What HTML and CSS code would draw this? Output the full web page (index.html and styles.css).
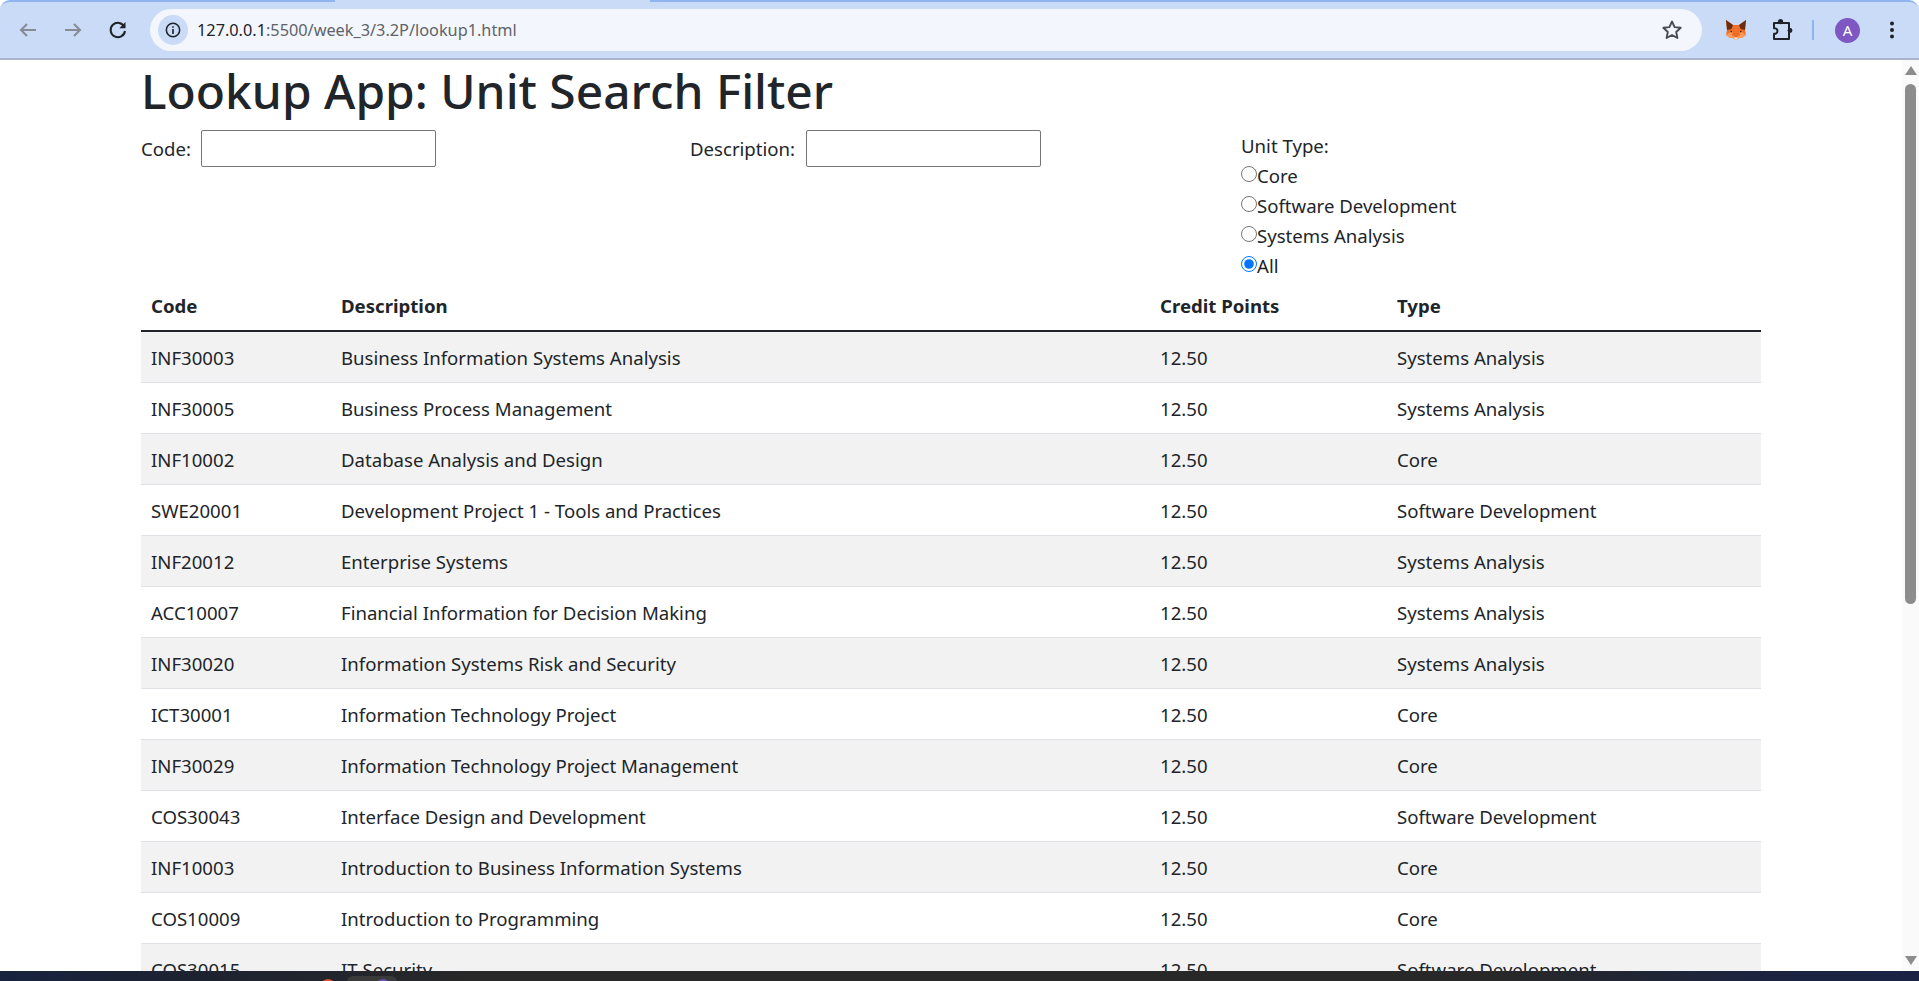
FILE: index.html
```html
<!DOCTYPE html>
<html lang="en">
<head>
<meta charset="utf-8">
<title>Lookup App</title>
<link rel="stylesheet" href="styles.css">
</head>
<body>
<div class="window">
  <header class="toolbar">
    <svg class="tb-icon" viewBox="0 0 24 24"><path d="M20 12H5M11 6l-6 6 6 6" fill="none" stroke="#868b94" stroke-width="2"/></svg>
    <svg class="tb-icon" viewBox="0 0 24 24"><path d="M4 12h15M13 6l6 6-6 6" fill="none" stroke="#868b94" stroke-width="2"/></svg>
    <svg class="tb-icon" viewBox="0 0 24 24"><path d="M18.400 9A7.200 7.200 0 1 0 19 13" fill="none" stroke="#1f2329" stroke-width="2"/><path d="M19.500 4v6.200h-6.200z" fill="#1f2329"/></svg>
    <div class="omnibox">
      <span class="site-info"><svg viewBox="0 0 20 20" width="18" height="18"><circle cx="10" cy="10" r="7.400" fill="none" stroke="#1f2329" stroke-width="1.700"/><path d="M9.100 9h1.800v5.400H9.100zM9.100 5.700h1.800v1.800H9.100z" fill="#1f2329"/></svg></span>
      <span class="url"><span class="host">127.0.0.1</span>:5500/week_3/3.2P/lookup1.html</span>
      <svg class="star" viewBox="0 0 24 24"><path d="M12 3.500l2.600 5.600 6.100.7-4.500 4.200 1.200 6-5.400-3-5.400 3 1.200-6-4.500-4.200 6.100-.7z" fill="none" stroke="#4a4d52" stroke-width="1.900" stroke-linejoin="round"/></svg>
    </div>
    <svg class="fox" viewBox="0 0 22 22"><path d="M1 1l7 5h6l7-5-1 10 1 5-4 3-3 0-3 2-3-2-3 0-4-3 1-5z" fill="#f0702a"/><path d="M1 1l7 5-1.500 4L2 11zM21 1l-7 5 1.500 4 4.500 1z" fill="#6b2e10"/><path d="M1 16l6-4 4 2 4-2 6 4-4 3-3 0-3 2-3-2-3 0z" fill="#fb9a5c"/><path d="M8 12l3 2 3-2 1 4-4 3-4-3z" fill="#f06a22"/><path d="M9 18.500h4L12 20.500h-2z" fill="#f3e6da"/><path d="M5 11.500l2.500.8-1.300 1.400zM17 11.500l-2.500.8 1.300 1.400z" fill="#3b2410"/></svg>
    <svg class="puzzle" viewBox="0 0 24 24"><path d="M4 5h15v16H4v-5.200a3 3 0 0 0 3.500-2.800A3 3 0 0 0 4 10.200z" fill="none" stroke="#1f2329" stroke-width="2" stroke-linejoin="round"/><circle cx="10.500" cy="3.600" r="2.600" fill="#1f2329"/><circle cx="20" cy="12.500" r="2.400" fill="#1f2329"/></svg>
    <span class="divider"></span>
    <span class="avatar">A</span>
    <svg class="menu" viewBox="0 0 24 24"><circle cx="12" cy="5.500" r="2"/><circle cx="12" cy="12" r="2"/><circle cx="12" cy="18.500" r="2"/></svg>
  </header>
  <div class="viewport">
    <main class="page">
      <div class="container">
        <h1 class="title">Lookup App: Unit Search Filter</h1>
        <form class="filters">
          <div class="field"><label for="code">Code:</label><input id="code" class="text-input" type="text"></div>
          <div class="field field-desc"><label for="desc">Description:</label><input id="desc" class="text-input" type="text"></div>
          <div class="types">
            <div>Unit Type:</div>
            <label class="radio-row"><input type="radio" name="t">Core</label>
            <label class="radio-row"><input type="radio" name="t">Software Development</label>
            <label class="radio-row"><input type="radio" name="t">Systems Analysis</label>
            <label class="radio-row"><input type="radio" name="t" checked>All</label>
          </div>
        </form>
        <table class="units">
          <thead><tr><th>Code</th><th>Description</th><th>Credit Points</th><th>Type</th></tr></thead>
          <tbody>
            <tr><td>INF30003</td><td>Business Information Systems Analysis</td><td>12.50</td><td>Systems Analysis</td></tr>
            <tr><td>INF30005</td><td>Business Process Management</td><td>12.50</td><td>Systems Analysis</td></tr>
            <tr><td>INF10002</td><td>Database Analysis and Design</td><td>12.50</td><td>Core</td></tr>
            <tr><td>SWE20001</td><td>Development Project 1 - Tools and Practices</td><td>12.50</td><td>Software Development</td></tr>
            <tr><td>INF20012</td><td>Enterprise Systems</td><td>12.50</td><td>Systems Analysis</td></tr>
            <tr><td>ACC10007</td><td>Financial Information for Decision Making</td><td>12.50</td><td>Systems Analysis</td></tr>
            <tr><td>INF30020</td><td>Information Systems Risk and Security</td><td>12.50</td><td>Systems Analysis</td></tr>
            <tr><td>ICT30001</td><td>Information Technology Project</td><td>12.50</td><td>Core</td></tr>
            <tr><td>INF30029</td><td>Information Technology Project Management</td><td>12.50</td><td>Core</td></tr>
            <tr><td>COS30043</td><td>Interface Design and Development</td><td>12.50</td><td>Software Development</td></tr>
            <tr><td>INF10003</td><td>Introduction to Business Information Systems</td><td>12.50</td><td>Core</td></tr>
            <tr><td>COS10009</td><td>Introduction to Programming</td><td>12.50</td><td>Core</td></tr>
            <tr><td>COS30015</td><td>IT Security</td><td>12.50</td><td>Software Development</td></tr>
          </tbody>
        </table>
      </div>
    </main>
    <div class="scrollbar">
      <span class="arrow-up"></span>
      <div class="track"><span class="thumb"></span></div>
      <span class="arrow-down"></span>
    </div>
  </div>
  <footer class="taskbar">
    <span class="task-dot task-orange"></span>
    <span class="task-tab"><span class="task-dot task-purple"></span></span>
  </footer>
</div>
</body>
</html>
```
FILE: styles.css
```css
* { box-sizing: border-box; }
html, body { margin: 0; height: 100%; overflow: hidden; }
body { font-family: "Noto Sans", "Open Sans", sans-serif; font-size: 18.6px; color: #212529; background: #fff; }
.window { height: 981px; display: flex; flex-direction: column; }
.toolbar { position: relative; height: 60px; flex: none; display: flex; align-items: center; background: #c9dbf6; border-top: 2px solid #8fb4f0; border-bottom: 2px solid #a8b5cb; padding-left: 16px; border-top-left-radius: 10px; border-top-right-radius: 10px; }
.toolbar::before { content: ""; position: absolute; left: 335px; top: -2px; width: 315px; height: 2px; background: #c9dbf6; }
.tb-icon { width: 24px; height: 24px; margin-right: 21px; flex: none; }
.omnibox { margin-left: -1px; width: 1552px; height: 42px; border-radius: 21px; background: #f3f7fd; display: flex; align-items: center; padding: 0 18px 0 8px; flex: none; }
.site-info { width: 30px; height: 30px; border-radius: 50%; background: #c9dbf6; display: flex; align-items: center; justify-content: center; flex: none; }
.url { margin-left: 9px; font-size: 16.300px; color: #5f6368; flex: 1; }
.host { color: #1f2329; }
.star { width: 24px; height: 24px; flex: none; }
.fox { width: 22px; height: 22px; margin-left: 23px; flex: none; }
.puzzle { width: 24px; height: 24px; margin-left: 23px; flex: none; }
.divider { width: 2px; height: 20px; margin-left: 18px; background: #8fb4f0; flex: none; }
.avatar { width: 25px; height: 25px; margin-left: 21px; border-radius: 50%; background: #7e57c2; color: #fff; font-size: 15px; display: flex; align-items: center; justify-content: center; flex: none; }
.menu { width: 24px; height: 24px; margin-left: 20px; fill: #1f2329; flex: none; }
.viewport { flex: 1; min-height: 0; display: flex; }
.page { flex: 1; min-width: 0; overflow: hidden; }
.container { width: 1650px; margin: 0 auto; padding: 0 15px; }
.title { margin: 0 0 9px; padding-top: 1px; font-size: 47.900px; font-weight: 500; line-height: 60px; }
.filters { display: grid; grid-template-columns: repeat(3, 1fr); column-gap: 30px; }
.field { display: flex; align-items: flex-start; gap: 10.500px; line-height: 37px; }
.field-desc { margin-left: -1px; }
.text-input { width: 235px; height: 37px; border: 1px solid #767676; border-radius: 2px; background: #fff; padding: 1px 2px; }
.types { line-height: 30px; padding-top: 1px; margin-bottom: -1px; }
.radio-row { display: block; }
.radio-row input { width: 16px; height: 16px; margin: 0; vertical-align: 1px; accent-color: #0075ff; }
.units { width: 100%; border-collapse: collapse; table-layout: fixed; }
.units th:nth-child(1) { width: 190px; }
.units th:nth-child(2) { width: 819px; }
.units th:nth-child(3) { width: 237px; }
.units th, .units td { padding: 11px 10px 9px; text-align: left; line-height: 30px; border-bottom: 1px solid #dee2e6; }
.units th { font-weight: 700; border-bottom: 2px solid #212529; }
.units tbody tr:nth-child(odd) { background: #f2f2f2; }
.scrollbar { width: 17px; flex: none; background: #fafafa; display: flex; flex-direction: column; align-items: center; padding: 6px 0; }
.track { flex: 1; width: 100%; padding: 9px 3px 0; }
.thumb { display: block; height: 520px; border-radius: 6px; background: #8c8c8c; }
.arrow-up { border: 6.500px solid transparent; border-top: 0; border-bottom: 9px solid #8c8c8c; }
.arrow-down { border: 6.500px solid transparent; border-bottom: 0; border-top: 9px solid #8c8c8c; }
.taskbar { height: 10px; flex: none; display: flex; overflow: hidden; padding-left: 321px; background: linear-gradient(90deg, #17233f, #1d2230 10%, #282828 25%, #282828 78%, #1b2340 92%, #1a2344); }
.task-dot { display: block; width: 14px; height: 14px; border-radius: 50%; }
.task-orange { margin-top: 8px; background: #d4561e; }
.task-tab { width: 50px; height: 12px; margin: 5px 0 0 12px; padding: 3px 0 0 29px; border-radius: 6px 6px 0 0; background: #3a3a3a; }
.task-purple { background: #6a4fc0; }
```
